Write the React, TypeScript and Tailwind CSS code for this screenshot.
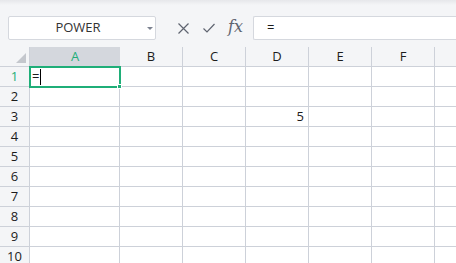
const cols = ["A", "B", "C", "D", "E", "F", ""];
const rows = [1, 2, 3, 4, 5, 6, 7, 8, 9, 10];

export default function App() {
  return (
    <div className="relative w-[456px] h-[263px] overflow-hidden bg-white font-['Open_Sans',sans-serif] text-[#1c1c1c]">
      {/* toolbar */}
      <div className="h-[47px] bg-[#f4f5f7]">
        <div className="h-[5px] bg-gradient-to-b from-[#e6e7ea] to-[#f4f5f7]" />
        <div className="flex items-center pt-[11px] pl-[8px]">
          <div className="relative w-[148px] h-[24px] bg-white border border-[#d5d8de] rounded-[2px] flex items-center justify-center text-[13px] text-[#333]">
            <span className="-ml-[8px]">POWER</span>
            <span className="absolute right-[2px] top-[10px] w-0 h-0 border-l-[3px] border-r-[3px] border-t-[3px] border-l-transparent border-r-transparent border-t-[#7c8290]" />
          </div>
          <div className="flex items-center ml-[21px] gap-[12px] text-[#5f6470]">
            <svg width="13" height="13" viewBox="0 0 13 13">
              <path d="M1.5 1.5 L11.5 11.5 M11.5 1.5 L1.5 11.5" stroke="currentColor" strokeWidth="1.2" fill="none" />
            </svg>
            <svg width="14" height="12" viewBox="0 0 14 12">
              <path d="M1.5 6.5 L5 10 L12.5 2" stroke="currentColor" strokeWidth="1.2" fill="none" />
            </svg>
            <span className="font-['DejaVu_Serif',serif] italic text-[16px] leading-none -mt-[3px]">fx</span>
          </div>
          <div className="ml-[10px] flex-1 h-[24px] bg-white border border-[#d5d8de] rounded-l-[2px] border-r-0 flex items-center pl-[13px] text-[13px]">
            =
          </div>
        </div>
      </div>

      {/* grid */}
      <div className="grid grid-cols-[30px_90px_63px_63px_63px_63px_63px_63px] text-[13px]">
        <div className="h-[20px] bg-[#f4f5f7] border-r border-b border-[#cdd1d9] relative">
          <svg width="10" height="10" viewBox="0 0 10 10" className="absolute left-[16px] top-[6px]">
            <path d="M10 0 L10 10 L0 10 Z" fill="#c4c7cd" />
          </svg>
        </div>
        {cols.map((c, i) => (
          <div
            key={i}
            className={
              i === 0
                ? "h-[20px] bg-[#d4d7dd] border-b border-[#cdd1d9] flex items-center justify-center text-[#1fae78]"
                : "h-[20px] bg-[#f4f5f7] border-r border-b border-[#cdd1d9] flex items-center justify-center"
            }
          >
            {c}
          </div>
        ))}
        {rows.map((r) => (
          <div key={r} className="contents">
            <div
              className={
                r === 1
                  ? "h-[20px] bg-[#f4f5f7] border-r border-b border-[#cdd1d9] flex items-center justify-center text-[#1fae78]"
                  : "h-[20px] bg-[#f4f5f7] border-r border-b border-[#cdd1d9] flex items-center justify-center"
              }
            >
              {r}
            </div>
            {cols.map((c, i) => (
              <div key={c + i} className="h-[20px] border-r border-b border-[#cdd1d9] flex items-center justify-end pr-[4px]">
                {r === 3 && c === "D" ? "5" : ""}
              </div>
            ))}
          </div>
        ))}
      </div>

      {/* selection */}
      <div className="absolute left-[29px] top-[66px] w-[92px] h-[22px] border-2 border-[#1fae78] flex items-center pl-[1px] text-[13px]">
        <span>=</span>
        <span className="ml-[1px] w-px h-[16px] bg-black" />
        <span className="absolute -right-[3px] -bottom-[3px] w-[5px] h-[5px] bg-[#1fae78] border border-white" />
      </div>
    </div>
  );
}
